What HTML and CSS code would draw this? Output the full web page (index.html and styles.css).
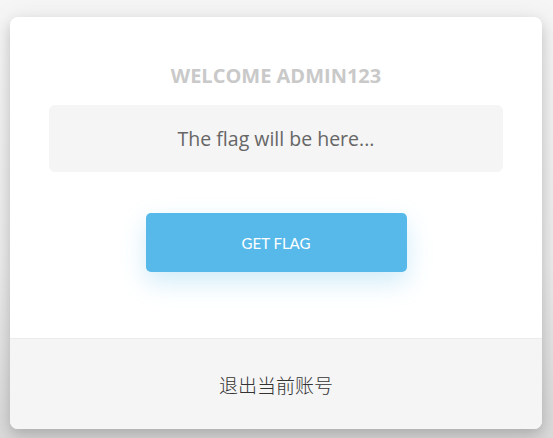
FILE: index.html
```html
<!DOCTYPE html>
<html lang="zh">
<head>
<meta charset="utf-8">
<title>Flag</title>
<link rel="stylesheet" href="styles.css">
</head>
<body>
<div class="card">
  <div class="main">
    <h1 class="title">WELCOME ADMIN123</h1>
    <div class="flag-box">The flag will be here...</div>
    <button class="btn">GET FLAG</button>
  </div>
  <div class="footer">退出当前账号</div>
</div>
</body>
</html>
```

FILE: styles.css
```css
html, body {
  margin: 0;
  padding: 0;
}
body {
  width: 553px;
  height: 438px;
  overflow: hidden;
  background: linear-gradient(#f6f6f6, #ececec 60%, #d9d9d9);
  box-sizing: border-box;
  padding: 17px 11px 0 10px;
  font-family: "Open Sans", "Noto Sans CJK SC", sans-serif;
}
.card {
  background: #fff;
  border-radius: 8px;
  overflow: hidden;
  height: 412px;
  display: flex;
  flex-direction: column;
  box-shadow: 0 6px 14px rgba(0,0,0,0.18), 0 0 30px rgba(0,0,0,0.06);
}
.main {
  flex: 1;
  display: flex;
  flex-direction: column;
  align-items: center;
  padding: 48px 39px 0;
}
.title {
  margin: 0;
  font-size: 20px;
  font-weight: 700;
  color: #c9c9c9;
  line-height: 22px;
}
.flag-box {
  align-self: stretch;
  margin-top: 18px;
  height: 67px;
  background: #f5f5f5;
  border-radius: 6px;
  display: flex;
  align-items: center;
  justify-content: center;
  font-size: 19.5px;
  color: #666;
}
.btn {
  margin-top: 41px;
  width: 261px;
  height: 59px;
  border: none;
  border-radius: 5px;
  background: #56b9ea;
  color: #fff;
  font-family: Lato, "Open Sans", sans-serif;
  font-size: 15px;
  box-shadow: 0 10px 24px rgba(86,185,234,0.28);
}
.footer {
  height: 90px;
  border-top: 1px solid #ebebeb;
  background: #f5f5f5;
  display: flex;
  align-items: center;
  justify-content: center;
  font-family: "Noto Sans CJK SC", sans-serif;
  font-weight: 300;
  font-size: 19px;
  color: #333;
}
```
